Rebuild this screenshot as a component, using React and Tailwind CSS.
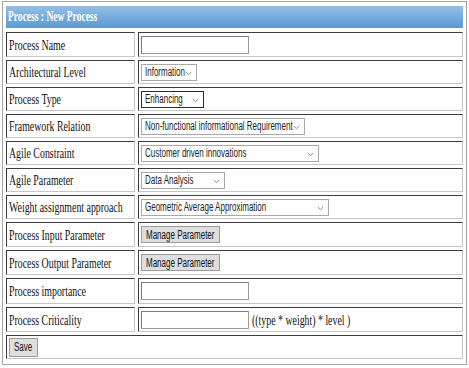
const serif = "font-['Liberation_Serif','Times_New_Roman',serif]";
const sans = "font-['Liberation_Sans',Arial,sans-serif]";

function Sq({ children, className = "", narrow }) {
  // narrow the glyphs like the reference
  return (
    <span
      className={
        "inline-block origin-left whitespace-nowrap " +
        (narrow ? "scale-x-[0.64] " : "scale-x-[0.68] ") +
        className
      }
    >
      {children}
    </span>
  );
}

function Chevron() {
  return (
    <svg width="7" height="5" viewBox="0 0 7 5" className="absolute right-[4px] top-[6px]">
      <path d="M0.8 1 L3.5 3.6 L6.2 1" fill="none" stroke="#8a8a8a" strokeWidth="1" />
    </svg>
  );
}

function Select({ value, w, dark }) {
  return (
    <div
      className={
        "relative h-[17px] bg-white border flex items-center pl-[3px] overflow-hidden " +
        (dark ? "border-[#2a2a2a]" : "border-[#a8a8a8]")
      }
      style={{ width: w }}
    >
      <Sq narrow className={sans + " text-[12.5px] leading-[14px] text-[#222]"}>{value}</Sq>
      <Chevron />
    </div>
  );
}

function TextBox() {
  return (
    <div className="w-[108px] h-[18px] bg-white border border-[#9a9a9a] border-t-[#7a7a7a] border-l-[#7a7a7a]" />
  );
}

function Btn({ label, w }) {
  return (
    <div
      className="h-[17px] bg-[#dedede] border border-[#9c9c9c] flex items-center pl-[4px] overflow-hidden"
      style={{ width: w }}
    >
      <Sq narrow className={sans + " text-[12.5px] leading-[14px] text-[#111]"}>{label}</Sq>
    </div>
  );
}

const cell =
  "border border-t-[#3c3c3c] border-l-[#3c3c3c] border-r-[#c6c6c6] border-b-[#c6c6c6] flex items-center";

function Row({ label, h, children }) {
  return (
    <div className="flex gap-[3px]" style={{ height: h }}>
      <div className={cell + " w-[129px] pl-[2px]"}>
        <Sq className={serif + " text-[14.5px] leading-[16px] text-[#111]"}>{label}</Sq>
      </div>
      <div className={cell + " w-[325px] pl-[2px]"}>{children}</div>
    </div>
  );
}

export default function App() {
  return (
    <div className="w-[469px] h-[368px] bg-white pt-[1px] pl-[2px]">
      <div className="w-[465px] h-[364px] border border-[#a4a4a4] pt-[4px] px-[3px] flex flex-col">
        <div className="h-[22px] mb-[4px] bg-linear-to-b from-[#93bfe5] to-[#5a99d3] flex items-center pl-[2px]">
          <Sq className={serif + " text-[14px] leading-[16px] font-bold text-white"}>Process : New Process</Sq>
        </div>
        <div className="flex flex-col gap-[3px]">
          <Row label="Process Name" h={25}>
            <TextBox />
          </Row>
          <Row label="Architectural Level" h={24}>
            <Select value="Information" w={56} />
          </Row>
          <Row label="Process Type" h={24}>
            <Select value="Enhancing" w={63} dark />
          </Row>
          <Row label="Framework Relation" h={24}>
            <Select value="Non-functional informational Requirement" w={164} />
          </Row>
          <Row label="Agile Constraint" h={24}>
            <Select value="Customer driven innovations" w={178} />
          </Row>
          <Row label="Agile Parameter" h={24}>
            <Select value="Data Analysis" w={84} />
          </Row>
          <Row label="Weight assignment approach" h={24}>
            <Select value="Geometric Average Approximation" w={188} />
          </Row>
          <Row label="Process Input Parameter" h={25}>
            <Btn label="Manage Parameter" w={79} />
          </Row>
          <Row label="Process Output Parameter" h={25}>
            <Btn label="Manage Parameter" w={79} />
          </Row>
          <Row label="Process importance" h={26}>
            <TextBox />
          </Row>
          <Row label="Process Criticality" h={25}>
            <TextBox />
            <Sq className={serif + " text-[14.5px] leading-[16px] text-[#111] ml-[3px]"}>((type * weight) * level )</Sq>
          </Row>
          <div className={cell + " h-[24px] w-[457px] pl-[2px]"}>
            <div className="w-[29px] h-[19px] bg-[#dedede] border border-[#9c9c9c] flex items-center pl-[4px] overflow-hidden">
              <Sq narrow className={sans + " text-[12.5px] leading-[14px] text-[#111]"}>Save</Sq>
            </div>
          </div>
        </div>
      </div>
    </div>
  );
}
